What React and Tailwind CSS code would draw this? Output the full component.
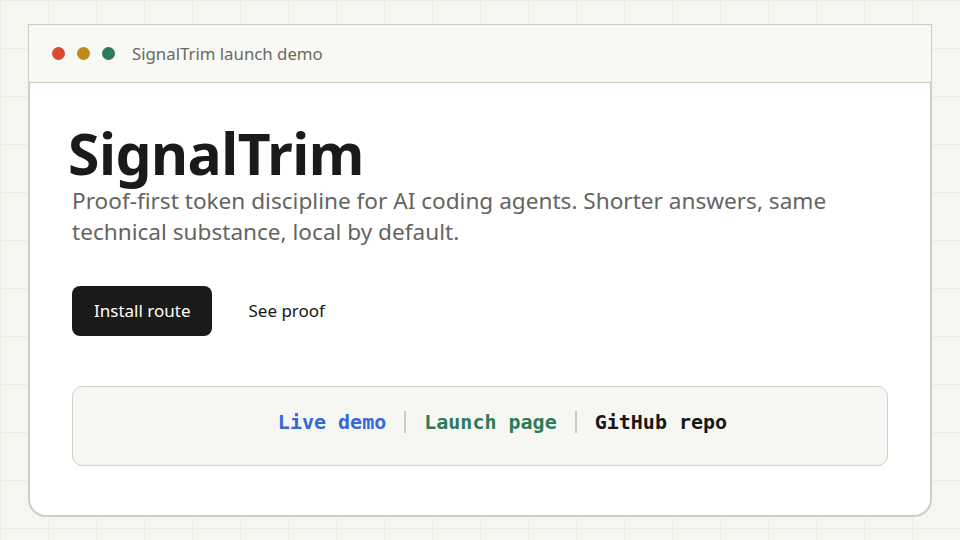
export default function App() {
  return (
    <div
      className="w-[960px] h-[540px] overflow-hidden bg-[#f6f6f1] pt-6 pl-7 bg-[linear-gradient(to_right,#ecece4_1px,transparent_1px),linear-gradient(to_bottom,#ecece4_1px,transparent_1px)] bg-[size:48px_48px]"
      style={{ fontFamily: '"Noto Sans", "Open Sans", sans-serif' }}
    >
      <div className="w-[904px]">
        {/* title bar */}
        <div className="h-[59px] border border-[#c9d0c1] bg-[#f8f8f4] flex items-center pl-[23px] gap-3">
          <span className="w-[13px] h-[13px] rounded-full bg-[#d94b2c]" />
          <span className="w-[13px] h-[13px] rounded-full bg-[#bf8a17]" />
          <span className="w-[13px] h-[13px] rounded-full bg-[#2d7b5a]" />
          <span className="ml-[5px] text-[16.8px] text-[#6a6a65]">SignalTrim launch demo</span>
        </div>

        {/* body */}
        <div className="h-[434px] border-2 border-t-0 border-[#c9d0c1] rounded-b-[18px] bg-white px-[42px] pt-[38px]">
          <h1 className="text-[57px] leading-[64px] font-bold text-[#1a1a18] -ml-1 tracking-[-0.5px]">
            SignalTrim
          </h1>
          <p className="text-[22.6px] leading-[31px] text-[#64645f] max-w-[790px]">
            Proof-first token discipline for AI coding agents. Shorter answers, same technical substance, local by default.
          </p>

          <div className="mt-[39px] flex items-center gap-9">
            <button className="h-[50px] px-[22px] rounded-lg bg-[#1b1a18] text-white text-[17px]">
              Install route
            </button>
            <a className="text-[17px] text-[#151513]">See proof</a>
          </div>

          <div
            className="mt-[50px] h-[80px] rounded-[10px] border border-[#cfd3c5] bg-[#f6f7f2] flex items-center justify-center gap-[18px] pl-[45px] pb-2 text-[20px] font-bold"
            style={{ fontFamily: '"DejaVu Sans Mono", "Liberation Mono", monospace' }}
          >
            <span className="text-[#3867d6]">Live demo</span>
            <span className="w-[2px] h-[22px] bg-[#c9cdc0]" />
            <span className="text-[#2d7b5a]">Launch page</span>
            <span className="w-[2px] h-[22px] bg-[#c9cdc0]" />
            <span className="text-[#161614]">GitHub repo</span>
          </div>
        </div>
      </div>
    </div>
  );
}
